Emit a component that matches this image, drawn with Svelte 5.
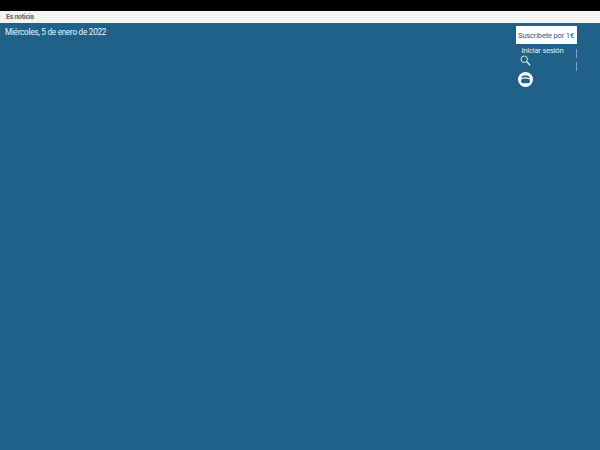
<script>
    let date = 'Miércoles, 5 de enero de 2022'
</script>

<div class="page">
    <div class="topbar"></div>
    <div class="newsbar">Es noticia</div>
    <header class="masthead">
        <span class="date">{date}</span>
        <div class="user">
            <a class="subscribe" href="#top">Suscríbete por 1€</a>
            <div class="tools">
                <div class="links">
                    <span class="login">Iniciar sesión</span>
                    <svg class="search" width="11" height="11" viewBox="0 0 13 13" fill="none" stroke="#e6eef3">
                        <circle cx="5" cy="5" r="3.8" stroke-width="1.1" />
                        <path d="M7.8 7.8 L12 12" stroke-width="1.6" />
                    </svg>
                    <svg class="mail" width="15" height="15" viewBox="0 0 16 16">
                        <circle cx="8" cy="8" r="8" fill="#fff" />
                        <path d="M3.6 6.6 Q3.8 3.8 6 3.8 H10 Q12.2 3.8 12.4 6.6 Q8 4.8 3.6 6.6 Z" fill="#20618a" />
                        <path d="M3.4 8 Q8 6 12.6 8 V10 Q12.6 12 10.6 12 H5.4 Q3.4 12 3.4 10 Z" fill="#20618a" />
                    </svg>
                </div>
                <div class="rules">
                    <i></i>
                    <i></i>
                </div>
            </div>
        </div>
    </header>
</div>

<style>
    :global(body) {
        margin: 0;
    }

    .page {
        display: flex;
        flex-direction: column;
        height: 450px;
        font-family: Roboto, "Liberation Sans", sans-serif;
        background-color: #20618a;
    }

    .topbar {
        height: 11px;
        background-color: #000;
    }

    .newsbar {
        height: 12px;
        padding-left: 6px;
        font-size: 7px;
        font-weight: 700;
        letter-spacing: -0.28px;
        line-height: 12px;
        color: #666;
        background-color: #f4f4f4;
    }

    .masthead {
        display: flex;
        justify-content: space-between;
        align-items: flex-start;
        padding: 3px 23px 0 5px;
    }

    .date {
        font-size: 8.2px;
        letter-spacing: -0.27px;
        line-height: 13px;
        color: #eef3f6;
    }

    .subscribe {
        display: block;
        width: 61px;
        height: 18px;
        font-size: 7.6px;
        letter-spacing: -0.2px;
        line-height: 19px;
        text-align: center;
        text-decoration: none;
        color: #20618a;
        background-color: #fff;
    }

    .tools {
        display: flex;
    }

    .links {
        display: flex;
        flex-direction: column;
        align-items: flex-start;
        width: 60px;
    }

    .login {
        margin: 1px 0 0 6px;
        font-size: 7.6px;
        letter-spacing: -0.2px;
        line-height: 12px;
        color: #e6eef3;
    }

    .search {
        margin: -2px 0 0 4px;
    }

    .mail {
        margin: 6px 0 0 2px;
    }

    .rules {
        display: flex;
        flex-direction: column;
        gap: 4px;
        padding-top: 5px;
    }

    .rules i {
        display: block;
        width: 1.5px;
        height: 9px;
        background-color: #7fa5bc;
    }
</style>
